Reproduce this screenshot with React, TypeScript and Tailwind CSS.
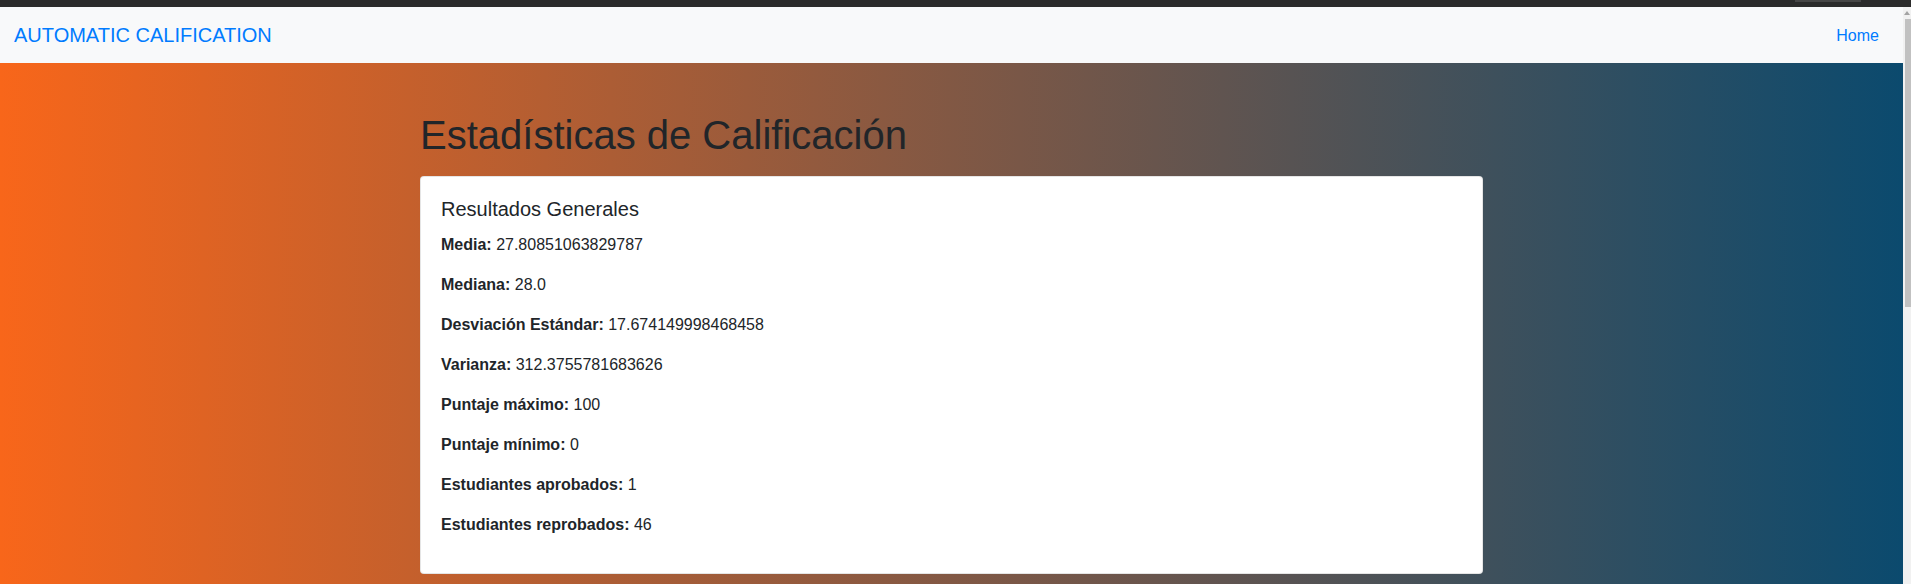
const stats = [
  { label: 'Media', value: '27.80851063829787' },
  { label: 'Mediana', value: '28.0' },
  { label: 'Desviación Estándar', value: '17.674149998468458' },
  { label: 'Varianza', value: '312.3755781683626' },
  { label: 'Puntaje máximo', value: '100' },
  { label: 'Puntaje mínimo', value: '0' },
  { label: 'Estudiantes aprobados', value: '1' },
  { label: 'Estudiantes reprobados', value: '46' },
];

function Scrollbar() {
  return (
    <div className="w-[8px] shrink-0 bg-[#f1f1f1] flex flex-col items-end">
      <div className="h-[12px] w-full flex items-center justify-center">
        <div className="w-0 h-0 border-l-[3px] border-r-[3px] border-b-[4px] border-l-transparent border-r-transparent border-b-[#a3a3a3]" />
      </div>
      <div className="h-[288px] w-[6px] bg-[#c1c1c1]" />
    </div>
  );
}

function App() {
  return (
    <div className="h-[584px] overflow-hidden flex flex-col font-['Liberation_Sans',Arial,sans-serif] text-[#212529]">
      <div className="h-[7px] shrink-0 bg-[#2b2b2b] flex justify-end">
        <div className="w-[66px] h-[2px] mr-[50px] bg-[#464646]" />
      </div>
      <div className="flex flex-1 min-h-0">
        <div className="flex-1 min-w-0 flex flex-col">
          <nav className="h-[56px] shrink-0 bg-[#f8f9fa] flex items-center justify-between pl-[14px] pr-[24px]">
            <a className="text-[20px] leading-[30px] text-[#007bff]">AUTOMATIC CALIFICATION</a>
            <a className="text-[16px] leading-[24px] mt-[2px] text-[#007bff]">Home</a>
          </nav>
          <main className="flex-1 bg-[linear-gradient(to_right,#f8661a,#0b4a6e)]">
            <div className="w-[1063px] mx-auto pt-[48px]">
              <h1 className="text-[40px] leading-[48px] mb-[17px]">Estadísticas de Calificación</h1>
              <div className="bg-white rounded-[4px] border border-black/10 p-5">
                <h5 className="text-[20px] leading-[24px] mb-3">Resultados Generales</h5>
                {stats.map((s) => (
                  <p key={s.label} className="text-[16px] leading-[24px] mb-4">
                    <strong className="font-bold">{s.label}:</strong> {s.value}
                  </p>
                ))}
              </div>
            </div>
          </main>
        </div>
        <Scrollbar />
      </div>
    </div>
  );
}

export default App;
